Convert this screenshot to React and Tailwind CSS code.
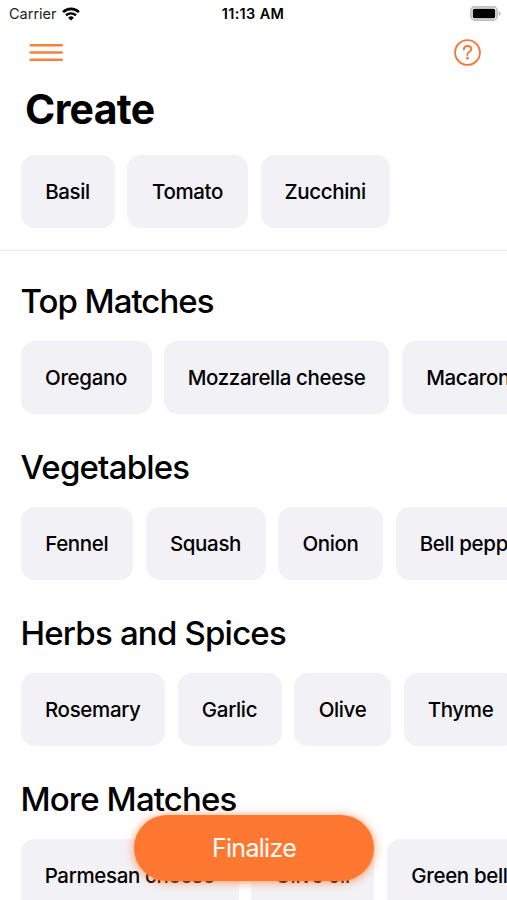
import React from 'react';

const selected = [
  { name: 'Basil', width: 'w-[94px]' },
  { name: 'Tomato', width: 'w-[121px]' },
  { name: 'Zucchini', width: 'w-[129.5px]' },
];

const sections = [
  {
    title: 'Top Matches',
    spacing: 'tracking-[-1px]',
    items: [
      { name: 'Oregano', width: 'w-[131px]' },
      { name: 'Mozzarella cheese', width: 'w-[225px]' },
      { name: 'Macaroni', width: 'w-[138px]' },
    ],
  },
  {
    title: 'Vegetables',
    spacing: 'tracking-[-0.8px]',
    items: [
      { name: 'Fennel', width: 'w-[112.5px]' },
      { name: 'Squash', width: 'w-[120px]' },
      { name: 'Onion', width: 'w-[105px]' },
      { name: 'Bell pepper', width: 'w-[156px]' },
    ],
  },
  {
    title: 'Herbs and Spices',
    spacing: 'tracking-[-0.8px]',
    items: [
      { name: 'Rosemary', width: 'w-[144.5px]' },
      { name: 'Garlic', width: 'w-[104px]' },
      { name: 'Olive', width: 'w-[97px]' },
      { name: 'Thyme', width: 'w-[114px]' },
    ],
  },
  {
    title: 'More Matches',
    spacing: 'tracking-[-0.85px]',
    items: [
      { name: 'Parmesan cheese', width: 'w-[218px]' },
      { name: 'Olive oil', width: 'w-[123px]' },
      { name: 'Green bell pepper', width: 'w-[219px]' },
    ],
  },
];

const WifiIcon = () => (
  <svg className="w-[18px] h-[14px]" viewBox="0 0 18 14" fill="none">
    <path d="M1.1 5.1a11.2 11.2 0 0 1 15.8 0" stroke="#000" strokeWidth="2.6" />
    <path d="M4 8.4a7.1 7.1 0 0 1 10 0" stroke="#000" strokeWidth="2.4" />
    <path d="M9 13.6 6.1 10.7a4.1 4.1 0 0 1 5.8 0Z" fill="#000" />
  </svg>
);

const BatteryIcon = () => (
  <svg className="w-[31px] h-[15px]" viewBox="0 0 31 15" fill="none">
    <rect x="0.9" y="0.9" width="26.2" height="13.2" rx="4" stroke="#bdbdbd" strokeWidth="1.7" />
    <rect x="2.8" y="2.8" width="22.4" height="9.4" rx="1.6" fill="#000" />
    <path d="M28.7 5.2c1.2.4 1.9 1.3 1.9 2.3s-.7 1.9-1.9 2.3Z" fill="#b5b5b5" />
  </svg>
);

const MenuIcon = () => (
  <svg className="w-[34px] h-[19px]" viewBox="0 0 34 19" fill="none" stroke="#f5803f" strokeWidth="2.5" strokeLinecap="round">
    <path d="M1.7 2.2h31M1.7 9.5h31M1.7 16.8h31" />
  </svg>
);

const HelpIcon = () => (
  <svg className="w-[27px] h-[27px]" viewBox="0 0 27 27" fill="none" stroke="#f57a3c" strokeLinecap="round">
    <circle cx="13.5" cy="13.5" r="12.4" strokeWidth="1.9" />
    <path d="M9.9 10.3c.1-2 1.5-3.2 3.6-3.2s3.7 1.2 3.7 3c0 1.4-.8 2.2-2 2.9-1.2.7-1.8 1.3-1.8 2.5v.4" strokeWidth="2" />
    <circle cx="13.4" cy="19.2" r="1.4" fill="#f57a3c" stroke="none" />
  </svg>
);

const Chip = ({ item }) => (
  <button
    className={`${item.width} h-[73px] shrink-0 rounded-[14px] bg-[#f2f1f6] pt-0.5 text-center text-[20.5px] font-medium tracking-[-0.35px] whitespace-nowrap`}
  >
    {item.name}
  </button>
);

const Section = ({ section }) => (
  <section className="h-[166px] pt-[30px]">
    <h2 className={`h-10 pl-[20.5px] text-[33px] leading-10 font-medium ${section.spacing}`}>{section.title}</h2>
    <div className="mt-5 flex gap-[12.5px] overflow-hidden pl-[20.5px]">
      {section.items.map((item) => (
        <Chip key={item.name} item={item} />
      ))}
    </div>
  </section>
);

export default function App() {
  return (
    <div className="relative h-[900px] w-full overflow-hidden bg-white font-['Inter',sans-serif] text-black">
      <div className="grid h-[27px] grid-cols-3 items-center pr-[6px] pl-[9px] text-[14.5px]">
        <div className="flex items-center gap-[5px] text-[#222]">
          <span>Carrier</span>
          <WifiIcon />
        </div>
        <div className="-ml-1 text-center text-[14.5px] font-semibold tracking-[0.35px]">11:13 AM</div>
        <div className="flex justify-end">
          <BatteryIcon />
        </div>
      </div>

      <header className="flex h-[50px] items-center justify-between pr-[26px] pl-[29px]">
        <button aria-label="Menu">
          <MenuIcon />
        </button>
        <button aria-label="Help">
          <HelpIcon />
        </button>
      </header>

      <h1 className="h-[78px] pt-[7px] pl-[25px] text-[41px] leading-[50px] font-bold tracking-[-0.7px]">Create</h1>

      <div className="flex h-[95.5px] gap-[12.5px] border-b border-[#e9e9eb] pl-[20.5px]">
        {selected.map((item) => (
          <Chip key={item.name} item={item} />
        ))}
      </div>

      <main>
        {sections.map((section) => (
          <Section key={section.title} section={section} />
        ))}
      </main>

      <button className="absolute top-[815px] left-[134px] h-[65.5px] w-[240px] rounded-full bg-[#ff7832] pt-0.5 text-[25px] tracking-[-0.7px] text-white shadow-[0_1px_10px_rgba(255,120,50,0.8)]">
        Finalize
      </button>
    </div>
  );
}
